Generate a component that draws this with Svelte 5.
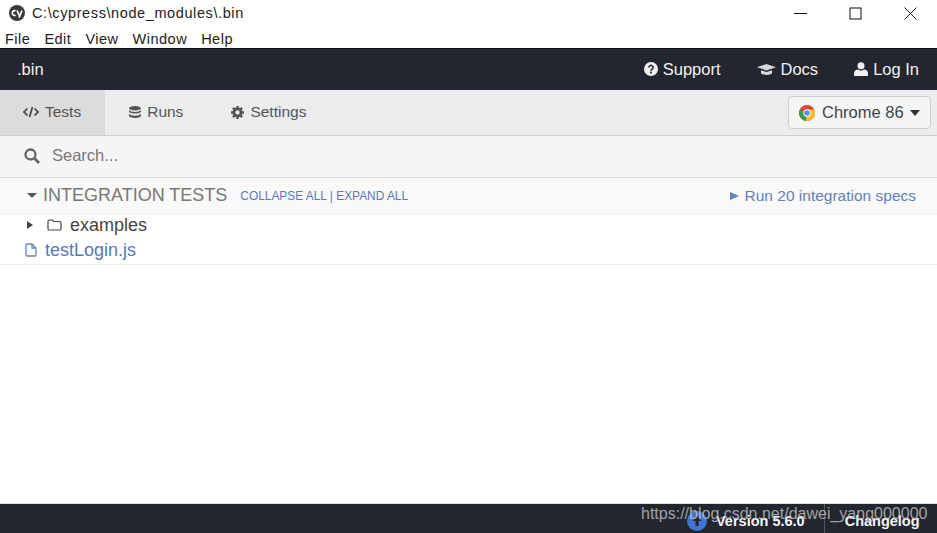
<script>
  const menus = ['File', 'Edit', 'View', 'Window', 'Help'];
</script>

<div class="app">
  <div class="titlebar">
    <svg class="cy" viewBox="0 0 16 16" width="16" height="16">
      <circle cx="8" cy="8" r="8" fill="#3a3a3a" />
      <path d="M6.600 5.800a2.400 2.400 0 1 0 0 4.400" fill="none" stroke="#fff" stroke-width="1.700" />
      <path d="M8 5.500l2.200 5M13 5.500l-3 7.200" fill="none" stroke="#fff" stroke-width="1.700" />
    </svg>
    <span class="path">C:\cypress\node_modules\.bin</span>
    <div class="winbtns">
      <svg viewBox="0 0 13 13" width="13" height="13"><path d="M0 6.500h13" stroke="#111" stroke-width="1" /></svg>
      <svg viewBox="0 0 13 13" width="13" height="13"><rect x="1" y="1" width="11" height="11" fill="none" stroke="#111" /></svg>
      <svg viewBox="0 0 13 13" width="13" height="13"><path d="M.5.5l12 12M12.500.5l-12 12" stroke="#222" /></svg>
    </div>
  </div>

  <div class="menubar">
    {#each menus as m}
      <span>{m}</span>
    {/each}
  </div>

  <header class="topnav">
    <span class="project">.bin</span>
    <nav class="toplinks">
      <span class="toplink">
        <svg viewBox="0 0 14 14" width="14" height="14">
          <circle cx="7" cy="7" r="7" fill="#f0f0f2" />
          <path d="M4.900 5.400a2.100 2 0 1 1 3.200 1.700c-.8.500-1.100.8-1.100 1.600" fill="none" stroke="#23262f" stroke-width="1.600" />
          <rect x="6.100" y="9.600" width="1.800" height="1.800" fill="#23262f" />
        </svg>
        Support
      </span>
      <span class="toplink">
        <svg viewBox="0 0 19 13" width="19" height="13">
          <path d="M9.500 1L19 4.200 9.500 7.400 0 4.200z" fill="#d8d8dc" />
          <path d="M4 7.200v3.400c1.500 1.700 9.500 1.700 11 0V7.200L9.500 9z" fill="#d8d8dc" />
        </svg>
        Docs
      </span>
      <span class="toplink">
        <svg viewBox="0 0 14 14" width="14" height="14">
          <circle cx="7" cy="3.800" r="3.500" fill="#f0f0f2" />
          <path d="M0 14v-2.500C0 9 2 7.500 4 7.500c2 1.500 4 1.500 6 0 2 0 4 1.500 4 4V14z" fill="#f0f0f2" />
        </svg>
        Log In
      </span>
    </nav>
  </header>

  <div class="tabs">
    <span class="tab active">
      <svg viewBox="0 0 16 12" width="16" height="12">
        <path d="M4.500 2.500L1 6l3.500 3.500M11.500 2.500L15 6l-3.500 3.500M9.500 1L6.500 11" fill="none" stroke="#444" stroke-width="1.700" />
      </svg>
      Tests
    </span>
    <span class="tab">
      <svg viewBox="0 0 12 12" width="12" height="12">
        <ellipse cx="6" cy="2.200" rx="6" ry="2.200" fill="#555" />
        <path d="M0 4v1.500c0 2.600 12 2.600 12 0V4c-1.500 2.600-10.500 2.600-12 0zM0 7.800v2c0 2.900 12 2.900 12 0v-2c-1.500 2.600-10.500 2.600-12 0z" fill="#555" />
      </svg>
      Runs
    </span>
    <span class="tab">
      <svg viewBox="0 0 12 12" width="13" height="13">
        <circle cx="6" cy="6" r="3.300" fill="none" stroke="#555" stroke-width="2.600" />
        <path d="M6 0v12M0 6h12M1.800 1.800l8.400 8.400M10.200 1.800l-8.400 8.400" stroke="#555" stroke-width="2.200" stroke-dasharray="2 8" />
      </svg>
      Settings
    </span>
    <button class="browser">
      <svg viewBox="0 0 16 16" width="16" height="16">
        <circle cx="8" cy="8" r="8" fill="#d9453a" />
        <path d="M8 8L1 4.500A8 8 0 0 0 7 16z" fill="#3b9a4a" />
        <path d="M8 4.500h7.200A8 8 0 0 1 7 16z" fill="#f2bd2c" />
        <circle cx="8" cy="8" r="3.700" fill="#fff" />
        <circle cx="8" cy="8" r="2.800" fill="#5a8fe0" />
      </svg>
      Chrome 86
      <span class="caret"></span>
    </button>
  </div>

  <div class="search">
    <svg viewBox="0 0 16 16" width="16" height="16">
      <circle cx="6.500" cy="6.500" r="5" fill="none" stroke="#666" stroke-width="2.300" />
      <path d="M10.300 10.300L15 15" stroke="#666" stroke-width="2.800" />
    </svg>
    <span>Search...</span>
  </div>

  <div class="specs-head">
    <span class="caret small"></span>
    <span class="title">INTEGRATION TESTS</span>
    <span class="toggles"><em>COLLAPSE ALL</em> | <em>EXPAND ALL</em></span>
    <span class="runall"><i></i>Run 20 integration specs</span>
  </div>

  <div class="row folder">
    <i class="tri"></i>
    <svg viewBox="0 0 15 12" width="15" height="12">
      <path d="M1 2.500c0-.8.500-1.500 1.200-1.500h3l1.500 1.500h6c.8 0 1.300.6 1.300 1.300v5.900c0 .7-.5 1.300-1.300 1.300H2.200c-.7 0-1.200-.6-1.200-1.300z" fill="none" stroke="#444" stroke-width="1.200" />
    </svg>
    <span>examples</span>
  </div>
  <div class="row file">
    <svg viewBox="0 0 12 14" width="12" height="14">
      <path d="M1 2c0-.6.400-1 1-1h5l4 4v7c0 .6-.4 1-1 1H2c-.6 0-1-.4-1-1zM7 1v4h4" fill="none" stroke="#6b84b8" stroke-width="1.300" />
    </svg>
    <span>testLogin.js</span>
  </div>

  <div class="spacer"></div>

  <footer class="footer">
    <svg viewBox="0 0 20 20" width="20" height="20">
      <circle cx="10" cy="10" r="10" fill="#3f74d4" />
      <path d="M10 4.500L5.500 10H8.500v5h3v-5h3z" fill="#1f2733" />
    </svg>
    <span class="version">Version 5.6.0</span>
    <span class="changelog">Changelog</span>
  </footer>

  <div class="watermark">https://blog.csdn.net/dawei_yang000000</div>
</div>

<style>
  :global(body) {
    margin: 0;
    background: #fff;
  }
  .app {
    position: relative;
    width: 937px;
    height: 533px;
    display: flex;
    flex-direction: column;
    overflow: hidden;
    font-family: "Liberation Sans", Arial, sans-serif;
    color: #444;
  }
  .titlebar {
    height: 26px;
    flex: none;
    display: flex;
    align-items: center;
    padding-left: 9px;
    color: #222;
  }
  .path {
    margin-left: 7px;
    font-size: 14.500px;
    letter-spacing: 0.600px;
  }
  .winbtns {
    margin-left: auto;
    display: flex;
    gap: 42px;
    padding-right: 20px;
  }
  .menubar {
    height: 22px;
    padding-top: 3px;
    box-sizing: border-box;
    flex: none;
    display: flex;
    align-items: center;
    gap: 14px;
    padding-left: 5px;
    font-size: 14.500px;
    letter-spacing: 0.500px;
    color: #222;
  }
  .topnav {
    height: 42px;
    flex: none;
    display: flex;
    align-items: center;
    justify-content: space-between;
    box-sizing: border-box;
    padding: 0 18px 1px 17px;
    background: #23262f;
    color: #f0f0f2;
    font-size: 16.500px;
    border-top: 1px solid #111;
  }
  .toplinks {
    display: flex;
    gap: 36px;
  }
  .toplink {
    display: flex;
    align-items: center;
    gap: 5px;
  }
  .tabs {
    height: 46px;
    flex: none;
    box-sizing: border-box;
    display: flex;
    align-items: stretch;
    background: #ececec;
    border-bottom: 1px solid #cfcfcf;
    font-size: 15.500px;
    color: #555;
  }
  .tab {
    display: flex;
    align-items: center;
    gap: 6px;
    padding: 0 24px 1px;
  }
  .tab.active {
    background: #dcdcdc;
    padding: 0 24px 1px 23px;
  }
  .browser {
    margin: 6px 6px 6px auto;
    width: 143px;
    display: flex;
    align-items: center;
    gap: 7px;
    padding: 0 0 0 10px;
    background: #f5f5f5;
    border: 1px solid #ccc;
    border-radius: 4px;
    font: inherit;
    font-size: 16.500px;
    color: #444;
    white-space: nowrap;
  }
  .caret {
    width: 0;
    height: 0;
    margin-left: -1px;
    border-left: 5.500px solid transparent;
    border-right: 5.500px solid transparent;
    border-top: 6px solid #333;
  }
  .caret.small {
    margin: 0 6px 0 0;
    border-left-width: 5px;
    border-right-width: 5px;
    border-top: 5px solid #555;
  }
  .search {
    height: 42px;
    flex: none;
    box-sizing: border-box;
    display: flex;
    align-items: center;
    gap: 12px;
    padding: 0 0 2px 24px;
    background: #f5f5f5;
    border-bottom: 1px solid #ddd;
    font-size: 16.500px;
    color: #777;
  }
  .specs-head {
    height: 36px;
    flex: none;
    box-sizing: border-box;
    display: flex;
    align-items: center;
    padding: 0 21px 0 27px;
    background: #f9f9f9;
    border-bottom: 1px solid #eee;
  }
  .title {
    font-size: 18px;
    color: #777;
  }
  .toggles {
    margin-left: 13px;
    font-size: 11.900px;
    color: #5a78b8;
  }
  .toggles em {
    font-style: normal;
  }
  .runall {
    margin-left: auto;
    display: flex;
    align-items: center;
    font-size: 15.500px;
    color: #6480b8;
  }
  .runall i {
    width: 0;
    height: 0;
    margin-right: 6px;
    border-top: 4.500px solid transparent;
    border-bottom: 4.500px solid transparent;
    border-left: 9px solid #6480b8;
  }
  .row {
    display: flex;
    align-items: center;
    flex: none;
    font-size: 18px;
  }
  .folder {
    height: 24px;
    box-sizing: border-box;
    padding: 0 0 2px 27px;
    color: #444;
  }
  .folder svg {
    margin: 0 8px 0 14px;
  }
  .tri {
    width: 0;
    height: 0;
    border-top: 4px solid transparent;
    border-bottom: 4px solid transparent;
    border-left: 6px solid #444;
  }
  .file {
    height: 27px;
    box-sizing: border-box;
    padding: 0 0 2px 25px;
    gap: 8px;
    color: #5a78b8;
    border-bottom: 1px solid #eee;
  }
  .spacer {
    flex: 1;
  }
  .footer {
    height: 30px;
    flex: none;
    box-sizing: border-box;
    display: flex;
    align-items: center;
    padding: 0 0 0 687px;
    background: #23262f;
    border-top: 1px solid #ddd;
    font-size: 14.500px;
    font-weight: bold;
    color: #f5f5f5;
    white-space: nowrap;
  }
  .footer svg,
  .version {
    margin-top: 5px;
  }
  .version {
    margin-left: 9px;
  }
  .changelog {
    align-self: stretch;
    display: flex;
    align-items: center;
    margin-left: 19px;
    padding: 5px 0 0 20px;
    border-left: 1px solid #555;
  }
  .watermark {
    position: absolute;
    left: 641px;
    top: 505px;
    font-size: 16px;
    color: rgba(190, 190, 190, 0.85);
    white-space: nowrap;
  }
</style>
